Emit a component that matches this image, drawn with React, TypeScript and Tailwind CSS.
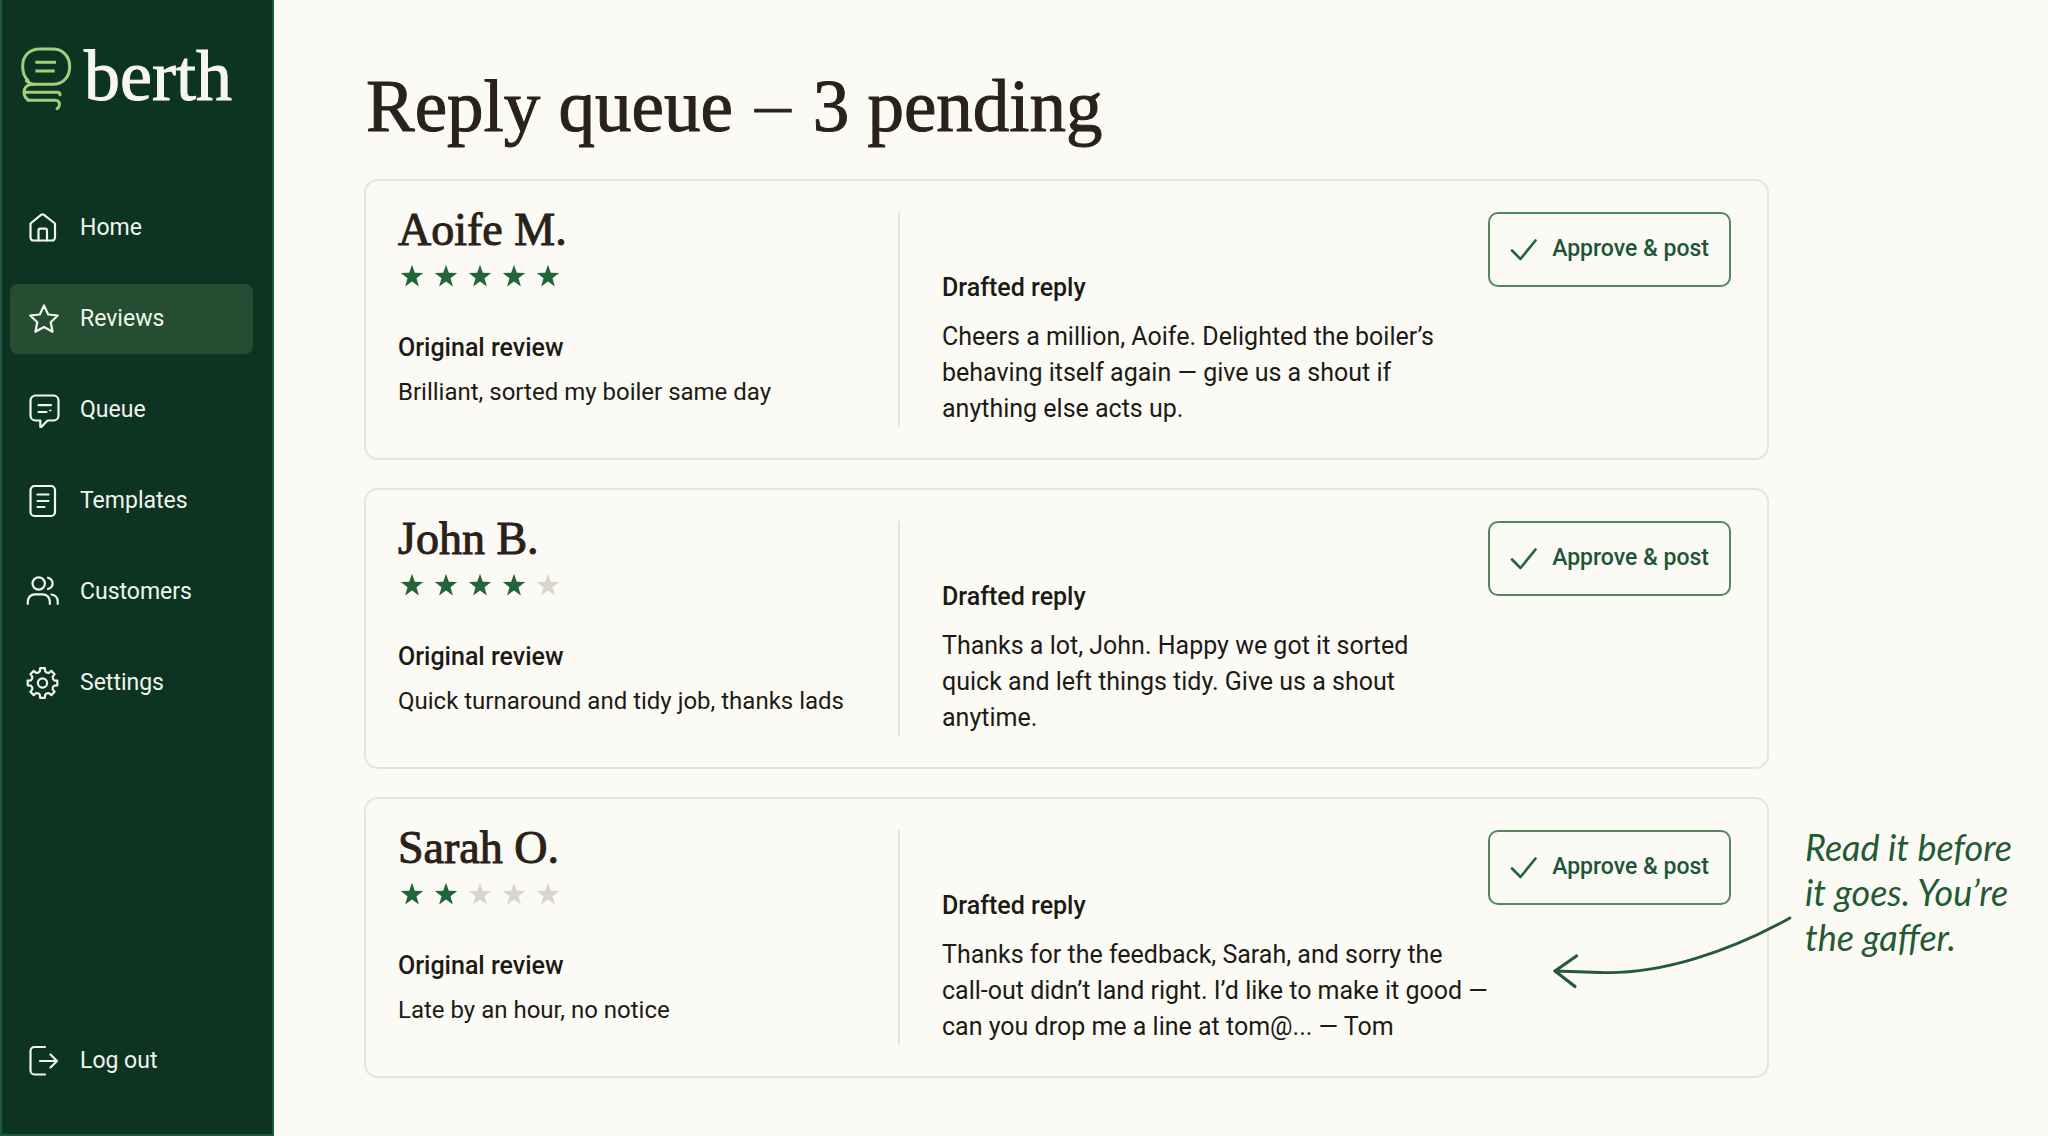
import { useState, type ReactNode } from "react";
import { clsx } from "clsx";

interface Review {
  id: string;
  author: string;
  rating: number;
  original: string;
  draft: string;
}

interface NavItem {
  label: string;
  icon: ReactNode;
}

const reviews: Review[] = [
  {
    id: "aoife",
    author: "Aoife M.",
    rating: 5,
    original: "Brilliant, sorted my boiler same day",
    draft:
      "Cheers a million, Aoife. Delighted the boiler’s\nbehaving itself again — give us a shout if\nanything else acts up.",
  },
  {
    id: "john",
    author: "John B.",
    rating: 4,
    original: "Quick turnaround and tidy job, thanks lads",
    draft:
      "Thanks a lot, John. Happy we got it sorted\nquick and left things tidy. Give us a shout\nanytime.",
  },
  {
    id: "sarah",
    author: "Sarah O.",
    rating: 2,
    original: "Late by an hour, no notice",
    draft:
      "Thanks for the feedback, Sarah, and sorry the\ncall-out didn’t land right. I’d like to make it good —\ncan you drop me a line at tom@... — Tom",
  },
];

// Outline of the settings cog: eight teeth with scooped valleys between them
function cogPath(cx: number, cy: number) {
  const at = (r: number, deg: number) => {
    const a = (deg * Math.PI) / 180;
    return `${(cx + r * Math.cos(a)).toFixed(2)} ${(cy + r * Math.sin(a)).toFixed(2)}`;
  };
  let d = "";
  for (let i = 0; i < 8; i++) {
    const a = i * 45;
    d += `${i === 0 ? "M" : "L"}${at(15, a - 9)}L${at(15, a + 9)}L${at(12, a + 13)}`;
    d += `Q${at(10.6, a + 22.5)} ${at(12, a + 32)}`;
  }
  return d + "Z";
}

function Icon({ children }: { children: ReactNode }) {
  return (
    <svg
      viewBox="-1 -2 36 36"
      className="size-9 shrink-0"
      fill="none"
      stroke="currentColor"
      strokeWidth="2.2"
      strokeLinecap="round"
      strokeLinejoin="round"
      aria-hidden="true"
    >
      {children}
    </svg>
  );
}

const navItems: NavItem[] = [
  {
    label: "Home",
    icon: (
      <Icon>
        <path d="M3.5 11.5 14 2.9a2.4 2.4 0 0 1 3 0l11 8.6V25.5a3 3 0 0 1-3 3H6.5a3 3 0 0 1-3-3Z" />
        <path d="M11.5 28.500v-10a1.800 1.800 0 0 1 1.800-1.800h4.900a1.800 1.800 0 0 1 1.800 1.800v10" />
      </Icon>
    ),
  },
  {
    label: "Reviews",
    icon: (
      <Icon>
        <path d="m17 2.500 4.200 9 9.600 1-7.100 6.700 1.900 9.600L17 24l-8.600 4.800 1.900-9.600-7.100-6.700 9.600-1Z" />
      </Icon>
    ),
  },
  {
    label: "Queue",
    icon: (
      <Icon>
        <path d="M8.500 1.500h18a5 5 0 0 1 5 5v15a5 5 0 0 1-5 5h-6l-6.200 6.500c-.4.4-1 .2-1-.5v-6H8.500a5 5 0 0 1-5-5v-15a5 5 0 0 1 5-5Z" />
        <path d="M11.500 11.200h12.500M11.500 18h8" />
        <path d="M22.500 16.500h1.500" strokeWidth="1.400" />
      </Icon>
    ),
  },
  {
    label: "Templates",
    icon: (
      <Icon>
        <rect x="3.500" y="1" width="24.500" height="30" rx="4" />
        <path d="M10.500 9.500h11M10.500 16h11M10.500 22h7" />
      </Icon>
    ),
  },
  {
    label: "Customers",
    icon: (
      <Icon>
        <circle cx="11.700" cy="7.500" r="6.200" />
        <path d="M.8 28v-2.700a7 7 0 0 1 7-7h8a7 7 0 0 1 7 7V28" />
        <path d="M21 1.700c3 1 4.600 3.200 4.600 5.700S24 12 21 13" />
        <path d="M24.500 18.500c3.800.7 6.200 3.200 6.200 7V28" />
      </Icon>
    ),
  },
  {
    label: "Settings",
    icon: (
      <Icon>
        <path d={cogPath(15.5, 16)} />
        <circle cx="15.500" cy="16" r="4.600" />
      </Icon>
    ),
  },
];

function Logo() {
  return (
    <div className="flex items-start gap-1 pl-3 pt-10">
      <svg
        viewBox="0 0 198 228"
        className="w-[66px] h-[76px] shrink-0"
        fill="none"
        stroke="#a3cf7b"
        strokeWidth="9"
        strokeLinecap="round"
        aria-hidden="true"
      >
        <path d="M42 121C30 111 26 95 26 79C26 46 48 27 78 27H116C146 27 167 48 167 80C167 112 146 133 116 133H56C38 133 30 145 30 157C30 169 36 176 44 180" />
        <path d="M37 123C43 124 46 133 58 133" />
        <path d="M32 157H129C135 157 138 160 138 164" />
        <path d="M42 181H124C135 181 138 190 136 197C135 202 132 204 129 206" />
        <path d="M64 67H126M64 93H122" strokeLinecap="butt" />
      </svg>
      <span className="font-['Liberation_Serif',serif] text-[72px] leading-[72px] text-[#f7f7f0] [-webkit-text-stroke:1px]">
        berth
      </span>
    </div>
  );
}

function Sidebar() {
  const [active, setActive] = useState("Reviews");

  return (
    <aside className="w-[274px] shrink-0 flex flex-col bg-[#0d3423] border-x-2 border-b-2 border-[#1c5a40] text-[#f1f5ec]">
      <Logo />
      <nav className="flex flex-col gap-[21px] mt-[77px] pl-2 pr-[19px]">
        {navItems.map((item) => (
          <a
            key={item.label}
            href="#"
            onClick={() => setActive(item.label)}
            aria-current={active === item.label ? "page" : undefined}
            className={clsx(
              "flex items-center gap-[18px] h-[70px] pl-4 rounded-lg text-[23px]",
              active === item.label && "bg-[#254d31]"
            )}
          >
            {item.icon}
            {item.label}
          </a>
        ))}
      </nav>
      <button
        type="button"
        className="flex items-center gap-[18px] h-[70px] mt-auto mb-[38px] ml-6 text-[23px]"
      >
        <Icon>
          <path d="M18 2H7.500a4 4 0 0 0-4 4v19.500a4 4 0 0 0 4 4H18" />
          <path d="M13 16h16.500M23.500 9.500l6.500 6.500-6.500 6.500" />
        </Icon>
        Log out
      </button>
    </aside>
  );
}

function Stars({ rating }: { rating: number }) {
  return (
    <div className="flex gap-2.5 mt-4 pl-0.5" role="img" aria-label={`${rating} out of 5 stars`}>
      {[1, 2, 3, 4, 5].map((n) => (
        <svg
          key={n}
          viewBox="0 0 24 24"
          className={clsx("size-6", n <= rating ? "text-[#226539]" : "text-[#d9d5cc]")}
          fill="currentColor"
        >
          <path d="m12 .8 2.800 8 8.400.200-6.700 5.200 2.400 8.200L12 17.600l-6.900 4.800 2.400-8.200L.8 9l8.400-.200Z" />
        </svg>
      ))}
    </div>
  );
}

function ReviewCard({ review }: { review: Review }) {
  return (
    <article className="flex border-2 border-[#e7e5d8] rounded-[14px] pl-8 pr-9 py-[31px]">
      <div className="w-[502px] shrink-0 border-r-2 border-[#e7e5d8]">
        <h2 className="font-['Liberation_Serif',serif] text-[46px] leading-9 text-[#2a2118] [-webkit-text-stroke:1px]">
          {review.author}
        </h2>
        <Stars rating={review.rating} />
        <h3 className="mt-11 leading-8 font-medium">Original review</h3>
        <p className="mt-3 text-2xl leading-8">{review.original}</p>
      </div>

      <div className="flex-1 pl-[42px]">
        <div className="flex justify-between">
          <h3 className="pt-15 leading-8 font-medium">Drafted reply</h3>
          <button
            type="button"
            className="flex items-center gap-3.5 h-[75px] px-5 border-2 border-[#57855f] rounded-[10px] text-[23px] font-medium text-[#1d5537]"
          >
            <svg
              viewBox="0 0 28 28"
              className="size-7"
              fill="none"
              stroke="#24643b"
              strokeWidth="2.600"
              strokeLinecap="round"
              strokeLinejoin="round"
              aria-hidden="true"
            >
              <path d="M2 14.500 10.500 23 25.500 4.500" />
            </svg>
            Approve &amp; post
          </button>
        </div>
        <p className="mt-[15px] leading-9 whitespace-pre-line">{review.draft}</p>
      </div>
    </article>
  );
}

function MarginNote() {
  return (
    <div className="relative text-[#245a33]">
      <svg
        viewBox="0 0 248 80"
        className="absolute right-full top-[87px] mr-2 w-[248px] h-20"
        fill="none"
        stroke="currentColor"
        strokeWidth="2.800"
        strokeLinecap="round"
        strokeLinejoin="round"
        aria-hidden="true"
      >
        <path d="M241 6C180 40 110 63 51 60.500C35 60 20 59.500 6 59" />
        <path d="M27.500 44 6 59l20 15.500" strokeWidth="3.200" />
      </svg>
      <p className="font-['Lato',sans-serif] italic text-4xl leading-[45px] whitespace-pre-line">
        {"Read it before\nit goes. You’re\nthe gaffer."}
      </p>
    </div>
  );
}

export default function App() {
  return (
    <div className="flex min-h-screen bg-[#fbfaf5] font-['Roboto',sans-serif] text-[25px] text-[#1d1a16]">
      <Sidebar />
      <main className="flex-1 flex flex-col pl-[90px] pt-[67px] pb-14">
        <h1 className="pl-0.5 font-['Liberation_Serif',serif] text-[73px] leading-[80px] text-[#2a2118] [-webkit-text-stroke:1px]">
          Reply queue{" "}
          <span className="font-['Roboto',sans-serif] font-light text-[56px] leading-none">—</span>{" "}
          {reviews.length} pending
        </h1>
        <div className="flex mt-8">
          <section className="flex-1 flex flex-col gap-7">
            {reviews.map((review) => (
              <ReviewCard key={review.id} review={review} />
            ))}
          </section>
          <div className="w-[279px] shrink-0 flex flex-col justify-end pl-9 pb-[118px]">
            <MarginNote />
          </div>
        </div>
      </main>
    </div>
  );
}
